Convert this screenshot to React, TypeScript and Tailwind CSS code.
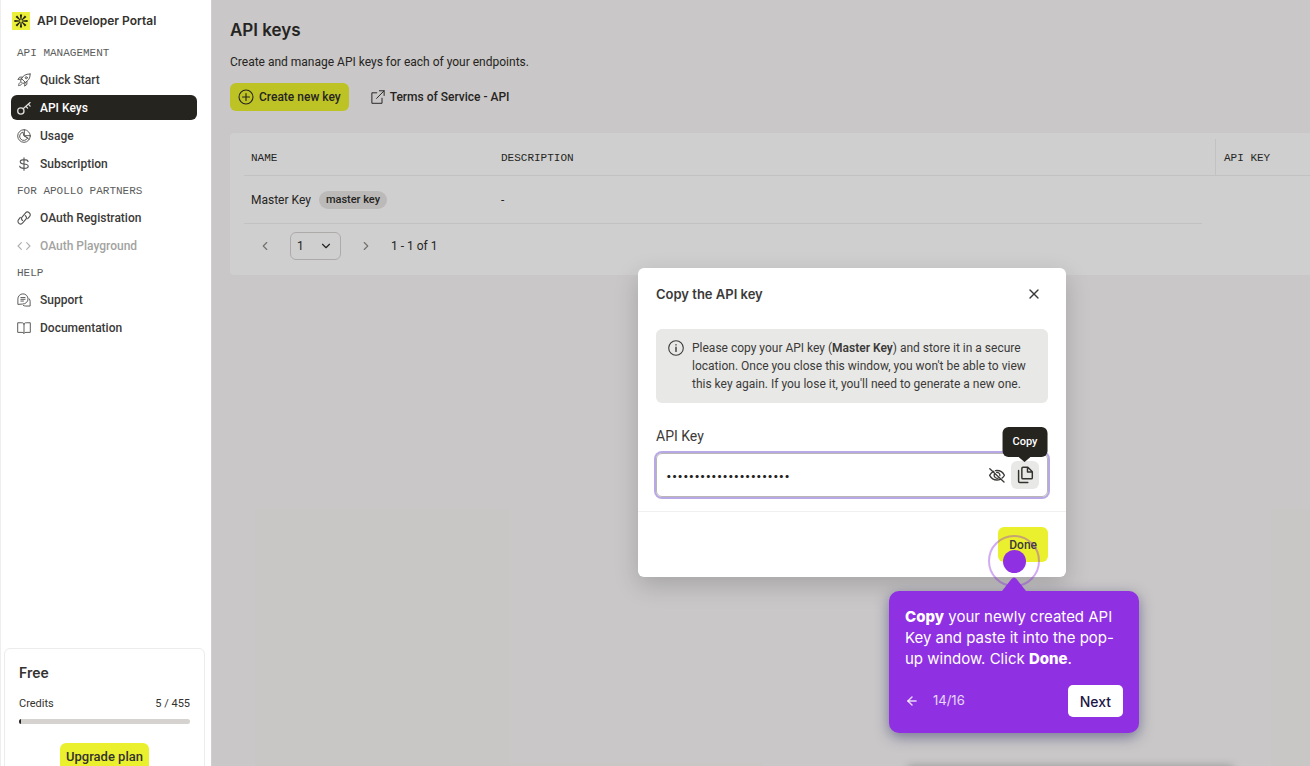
import { useState } from 'react';
import type { ReactNode } from 'react';
import { ArrowLeft, ChevronDown, ChevronLeft, ChevronRight, X } from 'lucide-react';

interface NavItem {
  label: string;
  icon: ReactNode;
  disabled?: boolean;
}

interface NavSection {
  title: string;
  items: NavItem[];
}

function Icon({ children, className = 'size-3.5' }: { children: ReactNode; className?: string }) {
  return (
    <svg
      className={`shrink-0 ${className}`}
      viewBox="0 0 16 16"
      fill="none"
      stroke="currentColor"
      strokeWidth={1.1}
      strokeLinecap="round"
      strokeLinejoin="round"
      aria-hidden="true"
    >
      {children}
    </svg>
  );
}

const sections: NavSection[] = [
  {
    title: 'API Management',
    items: [
      {
        label: 'Quick Start',
        icon: (
          <Icon>
            <path d="M15 1.200c-3.600-.200-6.400.800-8.400 3.300L5.200 6.400l4.400 4.400 1.900-1.500c2.600-2 3.600-4.700 3.500-8.100z" />
            <path d="M6.400 4.700H3L1 7.400l4.200-.600M11.300 9.600v3.400l-2.600 2 .5-4.200M5.200 6.400 4 9.300 6.700 12l2.900-1.200M3.800 10.600c-1.300.500-1.800 2-2 3.800 1.800-.200 3.200-.700 3.800-2" />
            <circle cx="10.600" cy="5.400" r="1.200" />
          </Icon>
        ),
      },
      {
        label: 'API Keys',
        icon: (
          <Icon>
            <g strokeWidth={1.5}>
              <circle cx="4.400" cy="11.400" r="3.600" />
              <path d="M7 8.900 15 1.800M10.200 6l1.900 2.100M13 3.600l2 2.200" />
            </g>
          </Icon>
        ),
      },
      {
        label: 'Usage',
        icon: (
          <Icon>
            <circle cx="8" cy="8" r="7.200" />
            <path d="M6.400 3.600a4.800 4.800 0 1 0 5.800 6.400L8.200 8zM8.400.900V7.600H15M8.400 7.800l5.400 4" />
          </Icon>
        ),
      },
      {
        label: 'Subscription',
        icon: (
          <Icon>
            <path
              strokeWidth={1.3}
              d="M8 1v14M12.600 5.200C12.300 3.700 10.700 3 8 3S3.700 3.900 3.700 5.500 5.300 7.800 8 8s4.800.900 4.800 2.600S10.800 13 8 13s-4.600-.800-4.900-2.500"
            />
          </Icon>
        ),
      },
    ],
  },
  {
    title: 'For Apollo Partners',
    items: [
      {
        label: 'OAuth Registration',
        icon: (
          <Icon>
            <path
              strokeWidth={1.3}
              d="M6.300 10.800a3 3 0 0 1-.300-4.200l3.600-4.200a3 3 0 0 1 4.700 3.900l-2.100 2.500M9.600 5.400a3 3 0 0 1 .400 4.200l-3.500 4.100A3 3 0 0 1 1.800 9.800l2-2.400"
            />
          </Icon>
        ),
      },
      {
        label: 'OAuth Playground',
        disabled: true,
        icon: (
          <Icon>
            <path strokeWidth={1.3} d="M5 4.200 1.200 8 5 11.800M11 4.200 14.800 8 11 11.800" />
          </Icon>
        ),
      },
    ],
  },
  {
    title: 'Help',
    items: [
      {
        label: 'Support',
        icon: (
          <Icon>
            <path d="M1 12.600V7a5.800 5.800 0 1 1 5.800 5.600zM4.400 5.200h4.800M4.400 7.200h4.800M4.400 9.200h3M14 6.600c.700.900 1 1.900 1 3v5.300h-5c-1 0-1.800-.200-2.600-.600" />
          </Icon>
        ),
      },
      {
        label: 'Documentation',
        icon: (
          <Icon>
            <path d="M8 3.400C7.500 2.500 6.600 2 5.500 2H.8v11h5c1 0 1.700.400 2.200 1.200.500-.800 1.200-1.200 2.200-1.200h5V2h-4.700C9.400 2 8.500 2.500 8 3.400zM8 3.400v10.600" />
          </Icon>
        ),
      },
    ],
  },
];

function Logo() {
  return (
    <svg className="size-[18px] shrink-0" viewBox="0 0 18 18" aria-hidden="true">
      <rect width="18" height="18" fill="#ebf03a" />
      <g fill="#1f1f14">
        {[0, 45, 90, 135, 180, 225, 270, 315].map((angle) => (
          <path key={angle} d="M7.900 2.400h2.200L9.400 8h-.8z" transform={`rotate(${angle} 9 9)`} />
        ))}
      </g>
    </svg>
  );
}

function Sidebar() {
  return (
    <aside className="flex h-full w-[212px] shrink-0 flex-col overflow-hidden border-x border-l-[#eeeeee] border-r-[#cfcdcd] bg-white">
      <div className="flex items-center gap-[7px] px-[11px] pt-3 pb-[15px]">
        <Logo />
        <span className="font-[Inter,sans-serif] text-[12px] leading-[18px] font-semibold">API Developer Portal</span>
      </div>
      <nav className="flex flex-col gap-[7px]">
        {sections.map((section) => (
          <div key={section.title}>
            <h2 className="mb-1.5 px-4 font-['Liberation_Mono',monospace] text-[11px] leading-4 text-[#5c5c5c] uppercase">
              {section.title}
            </h2>
            <ul className="flex flex-col gap-[3px] pr-3.5 pl-2.5">
              {section.items.map((item) => (
                <li key={item.label}>
                  <a
                    href="#"
                    aria-disabled={item.disabled}
                    className={`flex h-[25px] items-center gap-[9px] rounded-md px-1.5 text-[12px] font-medium ${
                      item.label === 'API Keys'
                        ? 'bg-[#26241f] text-white'
                        : item.disabled
                          ? 'text-[#a3a3a1]'
                          : 'text-[#3b3a38]'
                    }`}
                  >
                    <span className="opacity-85">{item.icon}</span>
                    <span>{item.label}</span>
                  </a>
                </li>
              ))}
            </ul>
          </div>
        ))}
      </nav>

      {/* Plan card */}
      <div className="mt-auto mr-1.5 -mb-6 ml-[3px] shrink-0 rounded-md border border-[#ececec] px-3.5 pt-3.5 pb-[18px]">
        <h3 className="font-[Inter,sans-serif] text-[14px] leading-5 font-semibold">Free</h3>
        <div className="mt-[13px] flex justify-between text-[11px] leading-4">
          <span>Credits</span>
          <span>5 / 455</span>
        </div>
        <div className="mt-[7px] h-[5px] overflow-hidden rounded-full bg-[#d6d2cf]">
          <div className="h-full bg-[#26241f]" style={{ width: `${(5 / 455) * 100}%` }} />
        </div>
        <div className="mt-[19px] flex justify-center">
          <button className="h-7 rounded-md bg-[#ebf02e] px-1.5 text-[13px] font-medium">Upgrade plan</button>
        </div>
      </div>
    </aside>
  );
}

function KeysTable() {
  return (
    <section className="mt-[22px] rounded-l bg-white pt-1.5 pl-3.5">
      <table className="w-full table-fixed border-separate border-spacing-0 text-left">
        <colgroup>
          <col className="w-[249px]" />
          <col />
          <col className="w-[108px]" />
        </colgroup>
        <thead className="font-['Liberation_Mono',monospace] text-[11px] uppercase">
          <tr className="h-[37px]">
            <th className="border-b border-[#efefef] px-[7px] pt-0.5 font-normal">Name</th>
            <th className="border-b border-[#efefef] px-2 pt-0.5 font-normal">Description</th>
            <th className="border-b border-[#efefef] p-0 font-normal">
              <div className="ml-[13px] flex h-9 items-center border-l border-[#efefef] px-2 pt-0.5">API Key</div>
            </th>
          </tr>
        </thead>
        <tbody className="text-[12px]">
          <tr className="h-12">
            <td className="border-b border-[#efefef] px-[7px]">
              <div className="flex items-center gap-2">
                Master Key
                <span className="rounded-full bg-[#e8e6e4] px-[7px] text-[11px] leading-[18px] font-medium">
                  master key
                </span>
              </div>
            </td>
            <td className="border-b border-[#efefef] px-2">-</td>
            <td />
          </tr>
        </tbody>
      </table>
      <div className="flex items-center pt-2 pb-[15px] pl-3.5 text-[12px]">
        <button aria-label="Previous page" className="text-[#8f8c89]">
          <ChevronLeft className="size-3.5" />
        </button>
        <div className="relative ml-[18px]">
          <select
            aria-label="Page"
            className="h-7 w-[51px] appearance-none rounded-md border border-[#d8d2d2] bg-transparent pl-1.5 text-[12px]"
          >
            <option>1</option>
          </select>
          <ChevronDown className="pointer-events-none absolute top-[7px] right-2 size-3.5" />
        </div>
        <button aria-label="Next page" className="ml-[18px] text-[#8f8c89]">
          <ChevronRight className="size-3.5" />
        </button>
        <span className="ml-[18px]">1 - 1 of 1</span>
      </div>
    </section>
  );
}

function CopyKeyDialog() {
  const [visible, setVisible] = useState(false);

  return (
    <div
      role="dialog"
      aria-labelledby="dialog-title"
      className="absolute top-[268px] left-[638px] w-[428px] rounded-md bg-white text-[#3b3a38] shadow-[0_8px_24px_rgba(0,0,0,0.18)]"
    >
      <div className="flex items-center justify-between px-[18px] pt-4">
        <h2 id="dialog-title" className="font-[Inter,sans-serif] text-[13px] leading-5 font-semibold">
          Copy the API key
        </h2>
        <button aria-label="Close" className="mr-1.5">
          <X className="size-4" strokeWidth={2} />
        </button>
      </div>

      <div className="px-[18px] pt-[25px] pb-3.5">
        <div className="flex gap-2 rounded-md bg-[#e8e8e6] px-3 py-2.5">
          <Icon className="mt-px size-4">
            <circle cx="8" cy="8" r="7.300" />
            <path d="M8 7.200v4.200M8 4.700v.2" strokeWidth={1.4} />
          </Icon>
          <p className="text-[12px] leading-[18px] whitespace-nowrap">
            Please copy your API key (<b className="font-semibold">Master Key</b>) and store it in a secure
            <br />
            location. Once you close this window, you won't be able to view
            <br />
            this key again. If you lose it, you'll need to generate a new one.
          </p>
        </div>

        <label htmlFor="api-key" className="mt-[23px] block text-[14px] leading-5">
          API Key
        </label>
        <div className="mt-[7px] flex h-11 items-center rounded-md border border-[#b9b7b5] px-2 ring-2 ring-[#b8a8e6]">
          <input
            id="api-key"
            type={visible ? 'text' : 'password'}
            readOnly
            value="k3y9Zq7LmX2wRt5VbN8cHd"
            className="ml-px min-w-0 flex-1 bg-transparent font-[Inter,sans-serif] text-[10px] text-[#26241f] outline-none"
          />
          <button aria-label="Show key" onClick={() => setVisible(!visible)} className="mr-1.5">
            <Icon className="size-4">
              <path
                strokeWidth={1.3}
                d="M.8 1.800 15 15M4.800 4.300C3 5.200 1.500 6.700.6 8.400c1.500 2.800 4.300 4.600 7.400 4.600 1.200 0 2.300-.3 3.300-.7M6.500 3.600c.5-.1 1-.1 1.500-.1 3.100 0 5.900 1.800 7.400 4.700-.6 1.100-1.400 2.100-2.300 2.900M5.500 7a3 3 0 0 0 4 4M7.600 5.300a3 3 0 0 1 3.300 3.300"
              />
            </Icon>
          </button>
          <div className="relative">
            <button
              aria-label="Copy key"
              className="flex size-7 items-center justify-center rounded-md bg-[#e8e8e6] text-[#33322f]"
            >
              <Icon className="size-[18px]">
                <path
                  strokeWidth={1.3}
                  d="M6.200 1.200h4.300l4 4v5.200a1 1 0 0 1-1 1H6.200a1 1 0 0 1-1-1V2.200a1 1 0 0 1 1-1zM10.200 1.400v4h4.100M2.300 4v9.600a1 1 0 0 0 1 1h7.200"
                />
              </Icon>
            </button>
            <div
              role="tooltip"
              className="absolute bottom-8 left-1/2 -translate-x-1/2 rounded-md bg-[#26241f] px-2.5 py-[7px] text-[11px] leading-4 font-medium text-white"
            >
              Copy
              <svg className="absolute top-full left-1/2 h-1.5 w-3 -translate-x-1/2" viewBox="0 0 12 6" aria-hidden="true">
                <path d="M0 0h12L6 5z" fill="#26241f" />
              </svg>
            </div>
          </div>
        </div>
      </div>

      <div className="flex justify-end border-t border-[#f0f0f0] px-[18px] py-[15px]">
        <button className="h-[35px] rounded-md bg-[#ebf02e] px-[11px] text-[12px] font-medium">Done</button>
      </div>
    </div>
  );
}

function TourStep() {
  return (
    <>
      <div className="absolute top-[535px] left-[988px] flex size-[52px] items-center justify-center rounded-full border-2 border-[#8f30e2]/40">
        <span className="size-[23px] rounded-full bg-[#8f30e2]" />
      </div>
      <div className="absolute top-[591px] left-[889px] w-[250px] rounded-[10px] bg-[#8f30e2] px-4 pt-[15px] pb-4 font-[Inter,sans-serif] text-white shadow-[0_4px_14px_rgba(50,50,110,0.55)]">
        <svg className="absolute bottom-full left-[113px] h-3.5 w-6" viewBox="0 0 24 14" aria-hidden="true">
          <path d="M0 14 9.500 2Q12-1.200 14.500 2L24 14z" fill="#8f30e2" />
        </svg>
        <p className="text-[15px] leading-[21px] whitespace-nowrap">
          <b className="font-extrabold">Copy</b> your newly created API
          <br />
          Key and paste it into the pop-
          <br />
          up window. Click <b className="font-extrabold">Done</b>.
        </p>
        <div className="mt-4 flex items-center">
          <button aria-label="Previous step" className="text-white/80">
            <ArrowLeft className="size-3.5" strokeWidth={2.5} />
          </button>
          <span className="ml-3.5 text-[13px] text-white/80">14/16</span>
          <button className="ml-auto h-8 rounded-[5px] bg-white px-3 text-[14px] font-medium text-[#1d1645]">Next</button>
        </div>
      </div>
    </>
  );
}

export default function App() {
  return (
    <div className="relative flex h-screen overflow-hidden font-[Roboto,sans-serif] text-[#33322f]">
      <Sidebar />
      <main className="relative min-w-0 flex-1 bg-[#f8f5f5] pt-4 pl-[18px] text-[#2e2d2a]">
        <h1 className="font-[Inter,sans-serif] text-[17px] leading-7 font-semibold">API keys</h1>
        <p className="mt-2 text-[12px] leading-5">Create and manage API keys for each of your endpoints.</p>
        <div className="mt-[11px] flex items-center gap-[22px] text-[12px] font-medium">
          <button className="flex h-7 items-center gap-[5px] rounded-md bg-[#ebf02e] px-2">
            <Icon className="size-4">
              <circle cx="8" cy="8" r="7" />
              <path d="M8 4.500v7M4.500 8h7" />
            </Icon>
            Create new key
          </button>
          <a href="#" className="flex items-center gap-[5px]">
            <Icon>
              <path d="M6.600 3.200H1v12h11.600V9.400M9.600.9H15v5.400M15 .9 6.400 9.600" />
            </Icon>
            Terms of Service - API
          </a>
        </div>
        <KeysTable />
        {/* Dims the page behind the dialog */}
        <div className="absolute inset-0 bg-black/19" />
      </main>
      <CopyKeyDialog />
      <TourStep />
      <div className="absolute top-full left-[908px] h-4 w-[325px] shadow-[0_0_8px_rgba(0,0,0,0.25)]" />
    </div>
  );
}
